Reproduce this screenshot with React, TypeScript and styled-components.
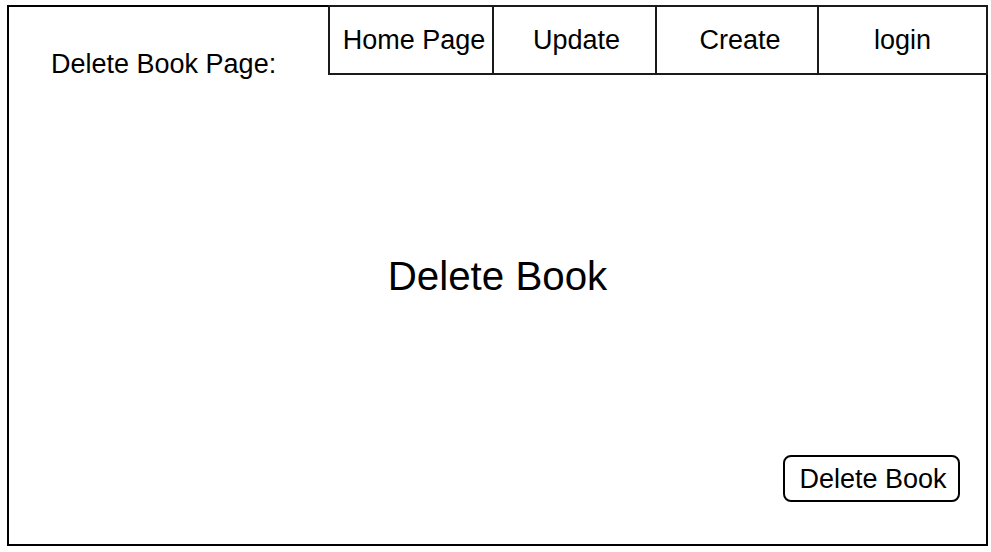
import styled, { createGlobalStyle } from 'styled-components';

const GlobalStyle = createGlobalStyle`
  html, body {
    margin: 0;
    padding: 0;
    background: #ffffff;
  }
  body {
    font-family: 'Liberation Sans', Arial, sans-serif;
    color: #000000;
  }
`;

const Frame = styled.div`
  box-sizing: border-box;
  margin: 5px 0 0 7px;
  width: 981px;
  height: 541px;
  border: 2px solid #000000;
  display: flex;
  flex-direction: column;
`;

const Header = styled.div`
  display: flex;
  height: 68px;
  margin: -2px -2px 0 0;
`;

const PageTitle = styled.div`
  width: 320px;
  box-sizing: border-box;
  padding: 44px 0 0 42px;
  font-size: 27px;
  line-height: 30px;
  white-space: nowrap;
`;

const Nav = styled.nav`
  flex: 1;
  display: flex;
`;

const Tab = styled.div<{ $w: number; $shift?: number }>`
  box-sizing: border-box;
  width: ${p => p.$w}px;
  height: 70px;
  border: 2px solid #1a1a1a;
  margin-left: -2px;
  padding-left: ${p => p.$shift ?? 0}px;
  display: flex;
  align-items: center;
  justify-content: center;
  font-size: 27px;
  line-height: 30px;
  white-space: nowrap;
  &:first-child {
    margin-left: 0;
  }
`;

const Main = styled.main`
  flex: 1;
  display: flex;
  flex-direction: column;
  align-items: center;
`;

const Heading = styled.h1`
  margin: 181px 0 0;
  font-weight: normal;
  font-size: 40.3px;
  line-height: 46px;
`;

const DeleteButton = styled.button`
  box-sizing: border-box;
  align-self: flex-end;
  margin: auto 26px 42px 0;
  width: 177px;
  height: 47px;
  border: 2px solid #000000;
  border-radius: 8px;
  background: #ffffff;
  font-family: 'Liberation Sans', Arial, sans-serif;
  font-size: 27px;
  line-height: 30px;
  color: #000000;
  padding: 0 0 0 3px;
`;

const tabs = [
  { label: 'Home Page', w: 166, shift: 6 },
  { label: 'Update', w: 165, shift: 4 },
  { label: 'Create', w: 164, shift: 6 },
  { label: 'login', w: 171, shift: 0 },
];

export default function App() {
  return (
    <>
      <GlobalStyle />
      <Frame>
        <Header>
          <PageTitle>Delete Book Page:</PageTitle>
          <Nav>
            {tabs.map(t => (
              <Tab key={t.label} $w={t.w} $shift={t.shift}>
                {t.label}
              </Tab>
            ))}
          </Nav>
        </Header>
        <Main>
          <Heading>Delete Book</Heading>
          <DeleteButton>Delete Book</DeleteButton>
        </Main>
      </Frame>
    </>
  );
}
